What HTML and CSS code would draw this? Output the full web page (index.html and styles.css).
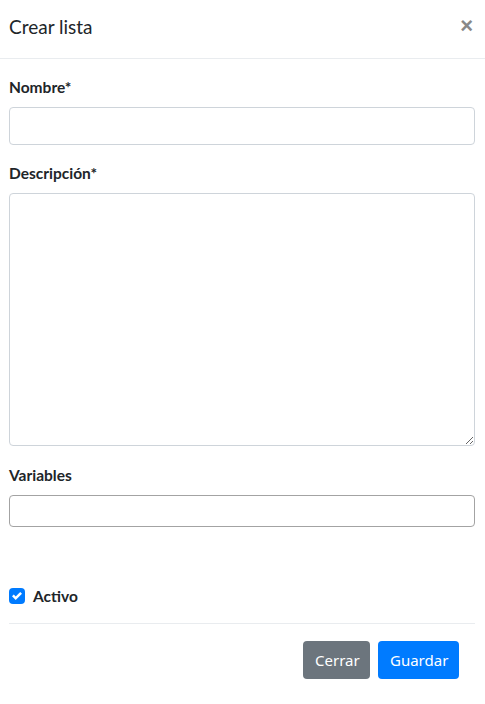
FILE: index.html
```html
<!DOCTYPE html>
<html lang="es">
<head>
<meta charset="utf-8">
<title>Crear lista</title>
<link rel="stylesheet" href="styles.css">
</head>
<body>
<div class="modal">
  <div class="modal-header">
    <h4 class="modal-title">Crear lista</h4>
    <button class="close" type="button" aria-label="Close">×</button>
  </div>
  <div class="modal-body">
    <div class="form-group">
      <label class="label">Nombre*</label>
      <input class="form-control" type="text">
    </div>
    <div class="form-group">
      <label class="label">Descripción*</label>
      <textarea class="form-control textarea"></textarea>
    </div>
    <div class="form-group">
      <label class="label">Variables</label>
      <input class="form-control variables" type="text">
    </div>
    <div class="check-row">
      <span class="check-box">
        <svg width="10" height="10" viewBox="0 0 8 8"><path fill="#fff" d="M6.564.75l-3.59 3.612-1.538-1.55L0 4.26l2.974 2.99L8 2.193z"/></svg>
      </span>
      <span class="check-label">Activo</span>
    </div>
    <div class="divider"></div>
  </div>
  <div class="modal-footer">
    <button class="btn btn-secondary" type="button">Cerrar</button>
    <button class="btn btn-primary" type="button">Guardar</button>
  </div>
</div>
</body>
</html>
```
FILE: styles.css
```css
* { box-sizing: border-box; }
html, body { margin: 0; padding: 0; background: #fff; }
body {
  font-family: "Lato", "Source Sans Pro", "Liberation Sans", sans-serif;
  color: #212529;
  font-size: 16px;
  line-height: 1.5;
}
.modal { width: 485px; }
.modal-header {
  height: 59px;
  display: flex;
  align-items: center;
  justify-content: space-between;
  padding: 0 12px 5px 9px;
  border-bottom: 1px solid #e9ecef;
}
.modal-title {
  margin: 0;
  font-size: 19px;
  font-weight: 400;
  line-height: 30px;
  color: #212529;
}
.close {
  border: 0;
  background: none;
  padding: 0;
  font-family: "Liberation Sans", Arial, sans-serif;
  font-size: 22px;
  font-weight: 700;
  color: #888;
  line-height: 1;
  margin-top: -2px;
}
.modal-body { padding: 16px 10px 0 9px; }
.form-group { margin-bottom: 16px; }
.label {
  display: block;
  font-weight: 700;
  font-size: 15.5px;
  line-height: 24px;
  margin-bottom: 8px;
}
.form-control {
  display: block;
  width: 100%;
  height: 38px;
  border: 1px solid #ced4da;
  border-radius: 4px;
  background: #fff;
  font: inherit;
  padding: 6px 12px;
}
.textarea { height: 253px; resize: vertical; }
.form-group:nth-child(3) { margin-bottom: 0; padding-top: 1px; }
.variables { height: 32px; border-color: #a3a3a3; }
.check-row {
  display: flex;
  align-items: center;
  margin-top: 61px;
  height: 16px;
}
.check-box {
  width: 16px;
  height: 16px;
  border-radius: 4px;
  background: #007bff;
  display: flex;
  align-items: center;
  justify-content: center;
}
.check-label {
  margin-left: 8px;
  font-weight: 700;
  font-size: 15.5px;
  line-height: 24px;
}
.divider {
  height: 1px;
  background: #e9ecef;
  margin-top: 19px;
}
.modal-footer {
  display: flex;
  justify-content: flex-end;
  gap: 8px;
  padding: 17px 26px 0 0;
}
.btn {
  height: 38px;
  border: 0;
  border-radius: 4px;
  color: #fff;
  font-family: "Noto Sans", "Open Sans", sans-serif;
  font-size: 15px;
  padding: 0 12px;
}
.btn-secondary { background: #6c757d; width: 67px; }
.btn-primary { background: #007bff; width: 81px; }
```
